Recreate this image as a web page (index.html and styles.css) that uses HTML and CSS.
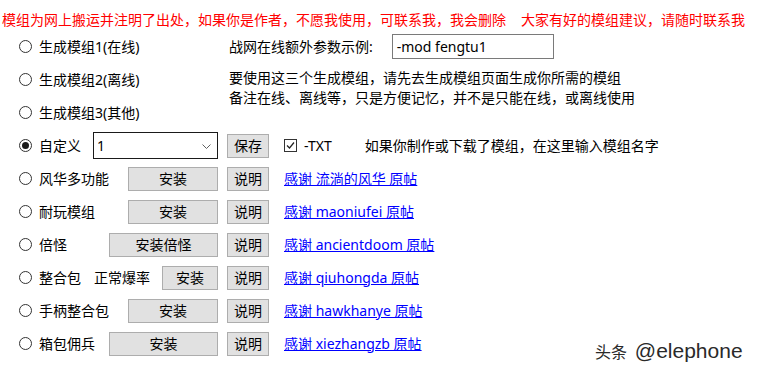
FILE: index.html
```html
<!DOCTYPE html>
<html lang="zh-CN">
<head>
<meta charset="utf-8">
<title>模组安装</title>
<link rel="stylesheet" href="styles.css">
</head>
<body>
<div class="page">
  <p class="notice">模组为网上搬运并注明了出处，如果你是作者，不愿我使用，可联系我，我会删除<span class="gap"></span>大家有好的模组建议，请随时联系我</p>

  <div class="form">
    <div class="top">
      <div class="top-left">
        <div class="row"><span class="radio"></span><span class="label">生成模组1(在线)</span></div>
        <div class="row"><span class="radio"></span><span class="label">生成模组2(离线)</span></div>
        <div class="row"><span class="radio"></span><span class="label">生成模组3(其他)</span></div>
      </div>
      <div class="top-right">
        <div class="row">
          <span>战网在线额外参数示例:</span>
          <span class="textbox">-mod fengtu1</span>
        </div>
        <p class="note">要使用这三个生成模组，请先去生成模组页面生成你所需的模组<br>备注在线、离线等，只是方便记忆，并不是只能在线，或离线使用</p>
      </div>
    </div>

    <div class="row">
      <div class="left">
        <span class="radio checked"></span><span class="label">自定义</span>
        <span class="combo"><span class="combo-text">1</span><svg class="chev" width="9" height="5" viewBox="0 0 9 5"><polyline points="0.5,0.5 4.5,4.5 8.5,0.5" fill="none" stroke="#606060" stroke-width="1"/></svg></span>
      </div>
      <span class="btn small">保存</span>
      <span class="checkbox"><svg width="11" height="11" viewBox="0 0 11 11"><polyline points="2,5.5 4.5,8 9,2.5" fill="none" stroke="#222" stroke-width="1.2"/></svg></span>
      <span class="txt">-TXT</span>
      <span class="hint">如果你制作或下载了模组，在这里输入模组名字</span>
    </div>

    <div class="row">
      <div class="left"><span class="radio"></span><span class="label">风华多功能</span><span class="btn install">安装</span></div>
      <span class="btn small">说明</span>
      <a class="link" href="#">感谢 流淌的风华 原帖</a>
    </div>

    <div class="row">
      <div class="left"><span class="radio"></span><span class="label">耐玩模组</span><span class="btn install">安装</span></div>
      <span class="btn small">说明</span>
      <a class="link" href="#">感谢 maoniufei 原帖</a>
    </div>

    <div class="row">
      <div class="left"><span class="radio"></span><span class="label">倍怪</span><span class="btn install wide">安装倍怪</span></div>
      <span class="btn small">说明</span>
      <a class="link" href="#">感谢 ancientdoom 原帖</a>
    </div>

    <div class="row">
      <div class="left"><span class="radio"></span><span class="label">整合包</span><span class="label sub">正常爆率</span><span class="btn install narrow">安装</span></div>
      <span class="btn small">说明</span>
      <a class="link" href="#">感谢 qiuhongda 原帖</a>
    </div>

    <div class="row">
      <div class="left"><span class="radio"></span><span class="label">手柄整合包</span><span class="btn install">安装</span></div>
      <span class="btn small">说明</span>
      <a class="link" href="#">感谢 hawkhanye 原帖</a>
    </div>

    <div class="row">
      <div class="left"><span class="radio"></span><span class="label">箱包佣兵</span><span class="btn install wide">安装</span></div>
      <span class="btn small">说明</span>
      <a class="link" href="#">感谢 xiezhangzb 原帖</a>
    </div>
  </div>

  <div class="watermark"><span class="wm-cjk">头条</span> @elephone</div>
</div>
</body>
</html>
```

FILE: styles.css
```css
html, body {
  margin: 0;
  padding: 0;
  background: #ffffff;
}

body {
  font-family: "Noto Sans", "Noto Sans CJK SC", sans-serif;
  font-size: 14px;
  line-height: 20px;
  color: #000000;
}

.page {
  position: relative;
  width: 759px;
  height: 372px;
  overflow: hidden;
  padding-top: 10px;
  box-sizing: border-box;
}

.notice {
  margin: 0 0 0 2px;
  color: #ff0000;
  white-space: nowrap;
  line-height: 20px;
}

.gap {
  display: inline-block;
  width: 15px;
}

.form {
  padding-left: 19px;
}

.top {
  display: flex;
}

.top-left {
  width: 210px;
}

.row {
  display: flex;
  align-items: center;
  height: 33px;
  white-space: nowrap;
}

.radio {
  flex: none;
  width: 13px;
  height: 13px;
  box-sizing: border-box;
  border: 1px solid #333333;
  border-radius: 50%;
  background: #ffffff;
  position: relative;
}

.radio.checked::after {
  content: "";
  position: absolute;
  left: 2px;
  top: 2px;
  width: 7px;
  height: 7px;
  border-radius: 50%;
  background: #1a1a1a;
}

.label {
  margin-left: 7px;
}

.label.sub {
  margin-left: 13px;
}

.textbox {
  display: flex;
  align-items: center;
  margin-left: 19px;
  width: 162px;
  height: 25px;
  box-sizing: border-box;
  border: 1px solid #7a7a7a;
  padding-left: 4px;
  font-size: 14px;
}

.note {
  margin: 5px 0 0 0;
  line-height: 20px;
}

.left {
  display: flex;
  align-items: center;
  width: 199px;
  flex: none;
}

.combo {
  margin-left: auto;
  width: 125px;
  height: 27px;
  box-sizing: border-box;
  border: 1px solid #1a1a1a;
  display: flex;
  align-items: center;
  justify-content: space-between;
  padding: 0 6px 0 3px;
  background: #ffffff;
}

.chev {
  display: block;
  margin-top: 1px;
}

.btn {
  display: flex;
  align-items: center;
  justify-content: center;
  flex: none;
  height: 24px;
  box-sizing: border-box;
  border: 1px solid #adadad;
  background: #e1e1e1;
  font-size: 14px;
}

.btn.install {
  margin-left: auto;
  width: 90px;
}

.btn.install.wide {
  width: 109px;
}

.btn.install.narrow {
  width: 56px;
}

.btn.small {
  margin-left: 9px;
  width: 42px;
}

.checkbox {
  margin-left: 15px;
  width: 13px;
  height: 13px;
  box-sizing: border-box;
  border: 1px solid #333333;
  display: flex;
  align-items: center;
  justify-content: center;
  background: #ffffff;
}

.checkbox svg {
  display: block;
}

.txt {
  margin-left: 7px;
}

.hint {
  margin-left: 33px;
}

.link {
  margin-left: 15px;
  color: #0000ff;
  text-decoration: underline;
}

.watermark {
  position: absolute;
  left: 595px;
  top: 338px;
  font-family: "Liberation Sans", "Noto Sans CJK SC", sans-serif;
  font-size: 21px;
  line-height: 26px;
  color: #2a2a2a;
  text-shadow: 0 0 2px #ffffff, 0 0 2px #ffffff;
  white-space: nowrap;
  word-spacing: 2px;
}

.wm-cjk {
  font-size: 16px;
}
```
